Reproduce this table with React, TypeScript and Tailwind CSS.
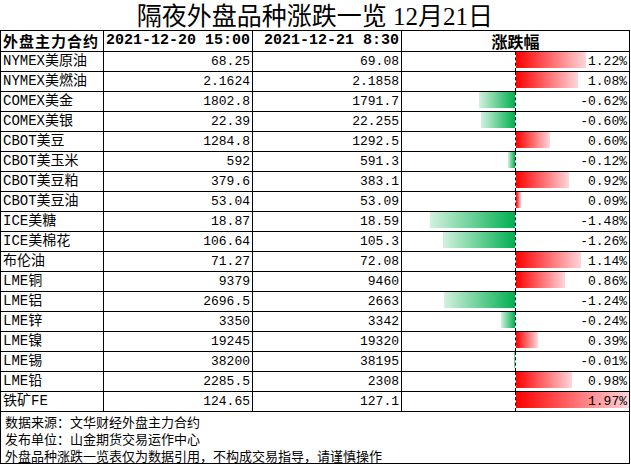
import React from "react";

type Row = { name: string; a: string; b: string; p: number };

const rows: Row[] = [
  { name: "NYMEX美原油", a: "68.25", b: "69.08", p: 1.22 },
  { name: "NYMEX美燃油", a: "2.1624", b: "2.1858", p: 1.08 },
  { name: "COMEX美金", a: "1802.8", b: "1791.7", p: -0.62 },
  { name: "COMEX美银", a: "22.39", b: "22.255", p: -0.6 },
  { name: "CBOT美豆", a: "1284.8", b: "1292.5", p: 0.6 },
  { name: "CBOT美玉米", a: "592", b: "591.3", p: -0.12 },
  { name: "CBOT美豆粕", a: "379.6", b: "383.1", p: 0.92 },
  { name: "CBOT美豆油", a: "53.04", b: "53.09", p: 0.09 },
  { name: "ICE美糖", a: "18.87", b: "18.59", p: -1.48 },
  { name: "ICE美棉花", a: "106.64", b: "105.3", p: -1.26 },
  { name: "布伦油", a: "71.27", b: "72.08", p: 1.14 },
  { name: "LME铜", a: "9379", b: "9460", p: 0.86 },
  { name: "LME铝", a: "2696.5", b: "2663", p: -1.24 },
  { name: "LME锌", a: "3350", b: "3342", p: -0.24 },
  { name: "LME镍", a: "19245", b: "19320", p: 0.39 },
  { name: "LME锡", a: "38200", b: "38195", p: -0.01 },
  { name: "LME铅", a: "2285.5", b: "2308", p: 0.98 },
  { name: "铁矿FE", a: "124.65", b: "127.1", p: 1.97 },
];

const SCALE = 57.4;

export default function App() {
  return (
    <div className="w-[631px] h-[465px] bg-white text-black overflow-hidden">
      <div className="w-[630px]">
        <div className="h-[30px] pt-[3px] text-center text-[25px] leading-[27px] font-['Liberation_Serif','Noto_Sans_CJK_SC',serif] whitespace-nowrap">
          隔夜外盘品种涨跌一览 12月21日
        </div>
        <div className="border-l border-t border-black">
          <div className="flex h-[21px] border-b border-black font-bold">
            <div className="w-[103px] border-r border-black pl-[2px] text-[15px] tracking-[1px] leading-[20px] font-['Noto_Sans_CJK_SC',sans-serif] whitespace-nowrap">
              外盘主力合约
            </div>
            <div className="w-[149px] border-r border-black pr-[2px] text-right text-[15px] leading-[20px] font-['Liberation_Mono',monospace] whitespace-nowrap">
              2021-12-20 15:00
            </div>
            <div className="w-[149px] border-r border-black pr-[2px] text-right text-[15px] leading-[20px] font-['Liberation_Mono',monospace] whitespace-nowrap">
              2021-12-21 8:30
            </div>
            <div className="w-[228px] border-r border-black text-center text-[16px] leading-[20px] font-['Noto_Sans_CJK_SC',sans-serif]">
              涨跌幅
            </div>
          </div>
          {rows.map((r) => {
            const w = Math.max(1, Math.round(Math.abs(r.p) * SCALE));
            const pct = (r.p < 0 ? "-" : "") + Math.abs(r.p).toFixed(2) + "%";
            return (
              <div key={r.name} className="flex h-[20px] border-b border-black">
                <div className="w-[103px] border-r border-black pl-[2px] text-[14px] leading-[19px] font-['Liberation_Mono','Noto_Sans_CJK_SC',monospace] whitespace-nowrap overflow-hidden">
                  {r.name}
                </div>
                <div className="w-[149px] border-r border-black pr-[2px] text-right text-[13px] leading-[19px] font-['Liberation_Mono',monospace]">
                  {r.a}
                </div>
                <div className="w-[149px] border-r border-black pr-[2px] text-right text-[13px] leading-[19px] font-['Liberation_Mono',monospace]">
                  {r.b}
                </div>
                <div className="relative w-[228px] border-r border-black flex">
                  <div className="w-[113px] flex justify-end items-start">
                    {r.p < 0 && (
                      <div
                        className="h-[16px] bg-[linear-gradient(to_right,#d2f1de,#00b050)]"
                        style={{ width: w }}
                      />
                    )}
                  </div>
                  <div className="w-0 border-l border-dashed border-black" />
                  <div className="flex-1 flex items-start">
                    {r.p > 0 && (
                      <div
                        className="h-[16px] bg-[linear-gradient(to_right,#ff0000,#ffd6da)]"
                        style={{ width: w }}
                      />
                    )}
                  </div>
                  <div className="absolute right-[2px] top-0 text-[13px] leading-[19px] font-['Liberation_Mono',monospace]">
                    {pct}
                  </div>
                </div>
              </div>
            );
          })}
        </div>
        <div className="h-[52px] border-l border-r border-b border-black pl-[4px] pt-[1px] text-[13px] leading-[17px] font-['Noto_Sans_CJK_SC',sans-serif] whitespace-nowrap">
          <div className="h-[17px]">数据来源：文华财经外盘主力合约</div>
          <div className="h-[17px]">发布单位：山金期货交易运作中心</div>
          <div className="h-[17px]">外盘品种涨跌一览表仅为数据引用，不构成交易指导，请谨慎操作</div>
        </div>
      </div>
    </div>
  );
}
